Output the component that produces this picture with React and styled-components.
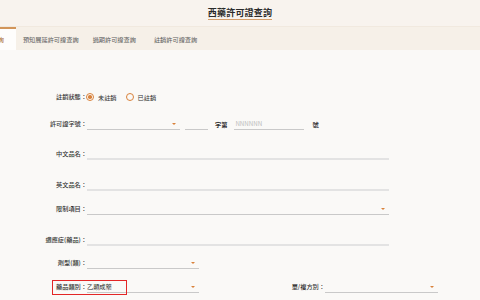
import React from 'react'
import styled, { createGlobalStyle } from 'styled-components'

const Global = createGlobalStyle`
  html, body {
    margin: 0;
    padding: 0;
    background: #faf9f7;
  }
  body {
    font-family: "Noto Sans CJK TC", "Noto Sans", sans-serif;
  }
`

const Page = styled.div`
  width: 480px;
  height: 300px;
  overflow: hidden;
  background: #faf9f7;
`

const Header = styled.div`
  height: 27px;
  background: #f8f3ee;
  display: flex;
  justify-content: center;
  align-items: flex-start;
  border-bottom: 1px solid #f1e9df;
  box-sizing: border-box;
`

const Title = styled.h1`
  margin: 8px 0 0;
  font-size: 9px;
  line-height: 10px;
  font-weight: 700;
  color: #2a2a2a;
  padding-bottom: 1px;
  border-bottom: 1.5px solid #d49f6b;
  letter-spacing: 0.2px;
`

const TabBar = styled.div`
  height: 23px;
  background: #f6f0e8;
  display: flex;
  overflow: hidden;
`

const TabStrip = styled.div`
  display: flex;
  margin-left: -39px;
`

const Tab = styled.div`
  display: flex;
  align-items: center;
  padding: 0 ${p => (p.$active ? '12px' : '7px')};
  font-size: 6.2px;
  color: ${p => (p.$active ? '#a8652e' : '#5e5e5e')};
  background: ${p => (p.$active ? '#fefdfc' : 'transparent')};
  border-top: 2px solid ${p => (p.$active ? '#d2955a' : 'transparent')};
  box-sizing: border-box;
  margin-right: ${p => p.$mr || 0}px;
  white-space: nowrap;
`

const Form = styled.div`
  display: flex;
  flex-direction: column;
`

const Row = styled.div`
  position: relative;
  display: flex;
  align-items: center;
  height: 12px;
  margin-top: ${p => p.$mt}px;
`

const Label = styled.div`
  width: ${p => p.$w || 87}px;
  flex: none;
  text-align: right;
  font-size: 6.2px;
  line-height: 12px;
  color: #353535;
  font-weight: 500;
  white-space: nowrap;
`

const Text = styled.span`
  font-size: 6.2px;
  color: ${p => (p.$muted ? '#bbb' : '#333')};
  font-weight: ${p => (p.$bold ? 700 : 400)};
  margin: 0 ${p => p.$mx || 0}px;
  white-space: nowrap;
`

const Line = styled.div`
  width: ${p => p.$w}px;
  height: 12px;
  box-sizing: border-box;
  border-bottom: ${p => p.$thick ? '2px solid #e3e3e3' : '1px solid #c9c9c9'};
  display: flex;
  align-items: center;
  justify-content: space-between;
  padding-right: 4px;
  font-size: 6.2px;
  color: #222;
  flex: none;
  margin-left: ${p => p.$ml || 0}px;
`

const Arrow = styled.span`
  width: 0;
  height: 0;
  border-left: 2px solid transparent;
  border-right: 2px solid transparent;
  border-top: 2.5px solid #d9823b;
`

const Radio = styled.span`
  width: 8px;
  height: 8px;
  box-sizing: border-box;
  border-radius: 50%;
  border: 1.3px solid #d9823b;
  display: flex;
  align-items: center;
  justify-content: center;
  margin: 0 4px 0 ${p => p.$ml}px;
  &::after {
    content: '';
    width: 3.5px;
    height: 3.5px;
    border-radius: 50%;
    background: ${p => (p.$checked ? '#d9823b' : 'transparent')};
  }
`

const Mark = styled.div`
  position: absolute;
  left: 52px;
  top: -1px;
  width: 75px;
  height: 15px;
  border: 1.5px solid #e32626;
  box-sizing: border-box;
`

const Select = ({ w, ml, value }) => (
  <Line $w={w} $ml={ml}>
    <span>{value}</span>
    <Arrow />
  </Line>
)

export default function App() {
  return (
    <Page>
      <Global />
      <Header>
        <Title>西藥許可證查詢</Title>
      </Header>
      <TabBar>
        <TabStrip>
          <Tab $active>許可證查詢</Tab>
          <Tab>預知展延許可證查詢</Tab>
          <Tab $mr={4}>過期許可證查詢</Tab>
          <Tab>註銷許可證查詢</Tab>
        </TabStrip>
      </TabBar>
      <Form>
        <Row $mt={41}>
          <Label>註銷狀態：</Label>
          <Radio $checked $ml={-1} />
          <Text>未註銷</Text>
          <Radio $ml={9} />
          <Text>已註銷</Text>
        </Row>
        <Row $mt={15}>
          <Label>許可證字號：</Label>
          <Select w={93} />
          <Line $w={23} $ml={5} />
          <Text $bold $mx={7}>字第</Text>
          <Line $w={70}>
            <Text $muted $mx={1}>NNNNNN</Text>
          </Line>
          <Text $bold $mx={8}>號</Text>
        </Row>
        <Row $mt={18}>
          <Label>中文品名：</Label>
          <Line $w={302} $thick />
        </Row>
        <Row $mt={19}>
          <Label>英文品名：</Label>
          <Line $w={302} $thick />
        </Row>
        <Row $mt={12}>
          <Label>限制項目：</Label>
          <Select w={302} />
        </Row>
        <Row $mt={19}>
          <Label>適應症(藥品)：</Label>
          <Line $w={302} $thick />
        </Row>
        <Row $mt={11}>
          <Label>劑型(類)：</Label>
          <Select w={112} />
        </Row>
        <Row $mt={12}>
          <Label>藥品類別：</Label>
          <Select w={112} value="乙類成藥" />
          <Label $w={126}>單/複方別：</Label>
          <Select w={113} />
          <Mark />
        </Row>
      </Form>
    </Page>
  )
}
